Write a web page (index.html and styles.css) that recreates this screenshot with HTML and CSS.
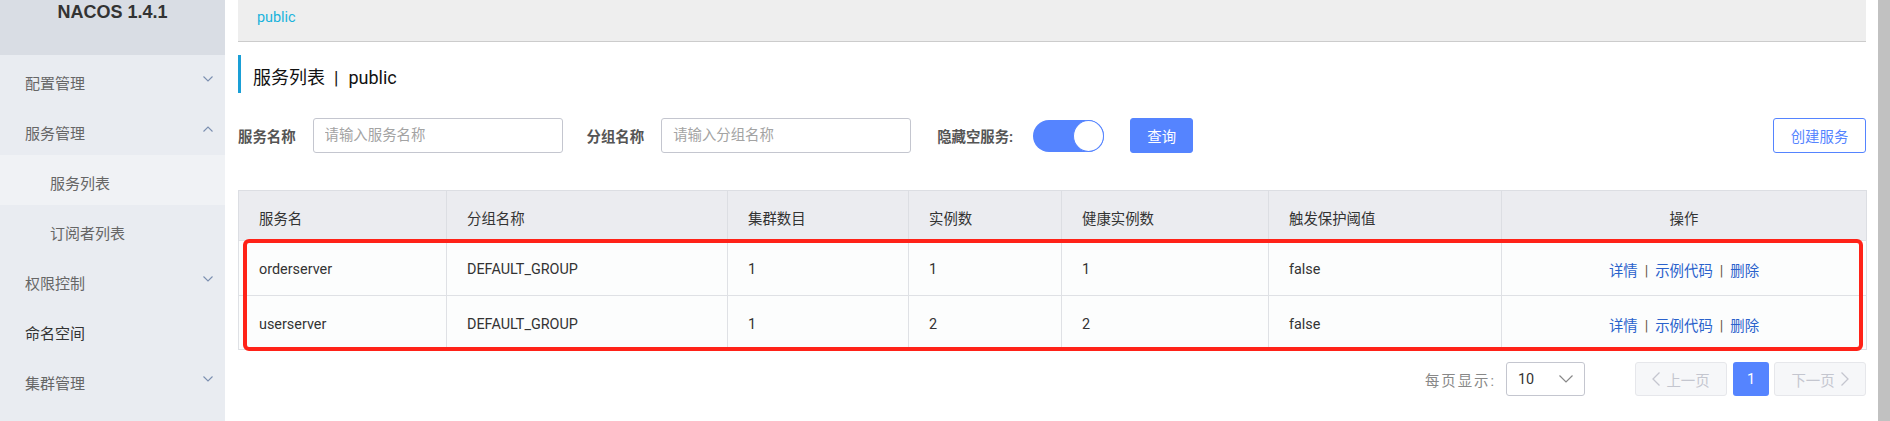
FILE: index.html
```html
<!DOCTYPE html>
<html lang="zh-CN">
<head>
<meta charset="utf-8">
<title>Nacos 服务列表</title>
<link rel="stylesheet" href="styles.css">
</head>
<body>
<div class="app">
  <aside class="sidebar">
    <div class="logo">NACOS 1.4.1</div>
    <ul class="menu">
      <li class="item"><span>配置管理</span><svg class="chev" viewBox="0 0 10 6"><polyline points="0.5,0.5 5,5 9.5,0.5"/></svg></li>
      <li class="item"><span>服务管理</span><svg class="chev" viewBox="0 0 10 6"><polyline points="0.5,5.5 5,1 9.5,5.5"/></svg></li>
      <li class="sub active">服务列表</li>
      <li class="sub">订阅者列表</li>
      <li class="item"><span>权限控制</span><svg class="chev" viewBox="0 0 10 6"><polyline points="0.5,0.5 5,5 9.5,0.5"/></svg></li>
      <li class="item dark"><span>命名空间</span></li>
      <li class="item"><span>集群管理</span><svg class="chev" viewBox="0 0 10 6"><polyline points="0.5,0.5 5,5 9.5,0.5"/></svg></li>
    </ul>
  </aside>

  <main class="main">
    <div class="crumb"><span class="crumb-link">public</span></div>

    <h1 class="title">服务列表<span class="title-sep">|</span>public</h1>

    <div class="filters">
      <label class="f-label">服务名称</label>
      <input class="f-input" type="text" placeholder="请输入服务名称">
      <label class="f-label">分组名称</label>
      <input class="f-input" type="text" placeholder="请输入分组名称">
      <label class="f-label f-label-switch">隐藏空服务:</label>
      <span class="switch"><span class="knob"></span></span>
      <button class="btn btn-primary">查询</button>
      <button class="btn btn-outline">创建服务</button>
    </div>

    <div class="table-wrap">
      <table class="grid">
        <colgroup>
          <col class="c1"><col class="c2"><col class="c3"><col class="c4"><col class="c5"><col class="c6"><col class="c7">
        </colgroup>
        <thead>
          <tr>
            <th>服务名</th><th>分组名称</th><th>集群数目</th><th>实例数</th><th>健康实例数</th><th>触发保护阈值</th><th class="center">操作</th>
          </tr>
        </thead>
        <tbody>
          <tr>
            <td>orderserver</td><td>DEFAULT_GROUP</td><td>1</td><td>1</td><td>1</td><td>false</td>
            <td class="center"><a class="link">详情</a><span class="bar">|</span><a class="link">示例代码</a><span class="bar">|</span><a class="link">删除</a></td>
          </tr>
          <tr>
            <td>userserver</td><td>DEFAULT_GROUP</td><td>1</td><td>2</td><td>2</td><td>false</td>
            <td class="center"><a class="link">详情</a><span class="bar">|</span><a class="link">示例代码</a><span class="bar">|</span><a class="link">删除</a></td>
          </tr>
        </tbody>
      </table>
      <div class="mark"></div>
    </div>

    <div class="pager">
      <span class="pg-label">每页显示:</span>
      <span class="pg-select"><span>10</span><svg class="pg-caret" viewBox="0 0 14 8"><polyline points="0.5,0.5 7,7 13.5,0.5"/></svg></span>
      <span class="pg-btn pg-nav pg-prev"><svg class="pg-arrow" viewBox="0 0 8 14"><polyline points="7.5,0.5 1,7 7.5,13.5"/></svg>上一页</span>
      <span class="pg-btn pg-cur">1</span>
      <span class="pg-btn pg-nav pg-next">下一页<svg class="pg-arrow" viewBox="0 0 8 14"><polyline points="0.5,0.5 7,7 0.5,13.5"/></svg></span>
    </div>
  </main>

  <div class="scrollbar"></div>
</div>
</body>
</html>
```

FILE: styles.css
```css
* { box-sizing: border-box; }

html, body {
  margin: 0;
  padding: 0;
  background: #ffffff;
}

body {
  font-family: Roboto, "Noto Sans CJK SC", sans-serif;
  font-size: 14.4px;
  color: #333333;
  overflow: hidden;
}

.app {
  display: flex;
  width: 1890px;
  height: 421px;
}

/* ---------- sidebar ---------- */
.sidebar {
  width: 225px;
  flex: 0 0 225px;
  background: #e9ecf1;
  height: 421px;
}

.logo {
  height: 55px;
  background: #d9dde4;
  text-align: center;
  font-family: "Liberation Sans", Arial, sans-serif;
  font-weight: bold;
  font-size: 18px;
  line-height: 24px;
  color: #333333;
}

.menu {
  list-style: none;
  margin: 0;
  padding: 0;
}

.item, .sub {
  height: 50px;
  display: flex;
  align-items: center;
  font-size: 15px;
  color: #666666;
  padding-top: 4px;
}

.item {
  padding-left: 25px;
  padding-right: 12px;
  justify-content: space-between;
}

.item.dark { color: #333333; }

.sub { padding-left: 50px; }

.sub.active { background: #f0f2f5; }

.chev {
  width: 10px;
  height: 6px;
  fill: none;
  stroke: #7b8fb0;
  stroke-width: 1.1;
  margin-top: -6px;
}

/* ---------- main ---------- */
.main {
  flex: 1;
  padding: 0 12px 0 13px;
  min-width: 0;
}

.crumb {
  height: 42px;
  background: #eeeeee;
  border-bottom: 1px solid #cccccc;
  padding: 7px 0 0 19px;
  line-height: 22px;
}

.crumb-link {
  color: #19b3dc;
  font-size: 14.4px;
}

.title {
  margin: 13px 0 0 0;
  height: 38px;
  border-left: 3px solid #1a9fd6;
  padding-left: 12px;
  font-size: 18px;
  font-weight: normal;
  line-height: 38px;
  color: #111111;
  padding-top: 4px;
}

.title-sep {
  margin: 0 10px 0 9px;
}

/* ---------- filters ---------- */
.filters {
  margin-top: 25px;
  display: flex;
  align-items: center;
  height: 35px;
}

.f-label {
  font-weight: bold;
  color: #555555;
  font-size: 14.4px;
  margin-right: 17px;
}

.f-label-switch {
  margin-left: 2px;
  margin-right: 20px;
}

.f-input {
  width: 250px;
  height: 35px;
  border: 1px solid #c4c6cf;
  border-radius: 3px;
  padding: 0 11px;
  font-family: Roboto, "Noto Sans CJK SC", sans-serif;
  font-size: 14.4px;
  color: #333333;
  margin-right: 24px;
  outline: none;
}

.f-input::placeholder { color: #a3a3a3; }

.switch {
  width: 71px;
  height: 32px;
  border-radius: 16px;
  background: #5584ff;
  display: flex;
  justify-content: flex-end;
  align-items: center;
  margin-right: 26px;
}

.knob {
  width: 31px;
  height: 32px;
  border-radius: 50%;
  background: #ffffff;
  border: 1px solid #5584ff;
}

.btn {
  height: 35px;
  border-radius: 3px;
  font-family: Roboto, "Noto Sans CJK SC", sans-serif;
  font-size: 14.4px;
  padding: 0;
  cursor: pointer;
}

.btn-primary {
  width: 63px;
  background: #5584ff;
  border: 1px solid #5584ff;
  color: #ffffff;
}

.btn-outline {
  margin-left: auto;
  width: 93px;
  background: #ffffff;
  border: 1px solid #5584ff;
  color: #5584ff;
}

/* ---------- table ---------- */
.table-wrap {
  position: relative;
  margin-top: 37px;
}

.grid {
  width: 1628px;
  border-collapse: collapse;
  table-layout: fixed;
  border: 1px solid #dcdee3;
}

.c1 { width: 208px; }
.c2 { width: 281px; }
.c3 { width: 181px; }
.c4 { width: 153px; }
.c5 { width: 207px; }
.c6 { width: 233px; }
.c7 { width: 365px; }

.grid th {
  height: 50px;
  background: #ebecf0;
  font-weight: normal;
  text-align: left;
  padding: 3px 0 0 20px;
  color: #333333;
  border-left: 1px solid #dcdee3;
  font-size: 14.4px;
}

.grid td {
  height: 55px;
  background: #fcfdfd;
  padding: 3px 0 0 20px;
  border-left: 1px solid #dfe1e5;
  border-top: 1px solid #dfe1e5;
  color: #333333;
  font-size: 14.4px;
}

.grid tbody tr:last-child td { height: 54px; }

.grid .center {
  text-align: center;
  padding-left: 0;
}

.link { color: #2a62cc; }

.bar {
  color: #6b5a48;
  margin: 0 7px;
}

.mark {
  position: absolute;
  left: 5px;
  top: 49px;
  width: 1620px;
  height: 112px;
  border: 4px solid #ff2218;
  border-radius: 6px;
  pointer-events: none;
}

/* ---------- pager ---------- */
.pager {
  margin-top: 12px;
  display: flex;
  justify-content: flex-end;
  align-items: center;
  height: 34px;
}

.pg-label {
  color: #888888;
  font-size: 14.4px;
  margin-right: 10px;
  letter-spacing: 2px;
}

.pg-select {
  width: 79px;
  height: 34px;
  border: 1px solid #c4c6cf;
  border-radius: 3px;
  display: flex;
  align-items: center;
  justify-content: space-between;
  padding: 0 11px 0 11px;
  color: #333333;
  margin-right: 50px;
}

.pg-caret {
  width: 14px;
  height: 8px;
  fill: none;
  stroke: #888888;
  stroke-width: 1.2;
}

.pg-btn {
  height: 34px;
  border-radius: 3px;
  display: flex;
  align-items: center;
  justify-content: center;
  font-size: 14.4px;
}

.pg-nav {
  width: 92px;
  background: #f6f7f9;
  border: 1px solid #e6e7eb;
  color: #c4c6cf;
  gap: 6px;
}

.pg-cur {
  width: 36px;
  margin: 0 5px 0 6px;
  background: #5584ff;
  color: #ffffff;
}

.pg-arrow {
  width: 8px;
  height: 14px;
  fill: none;
  stroke: #c4c6cf;
  stroke-width: 1.3;
}

/* ---------- scrollbar ---------- */
.scrollbar {
  width: 12px;
  flex: 0 0 12px;
  background: #c1c1c1;
  height: 421px;
}
```
